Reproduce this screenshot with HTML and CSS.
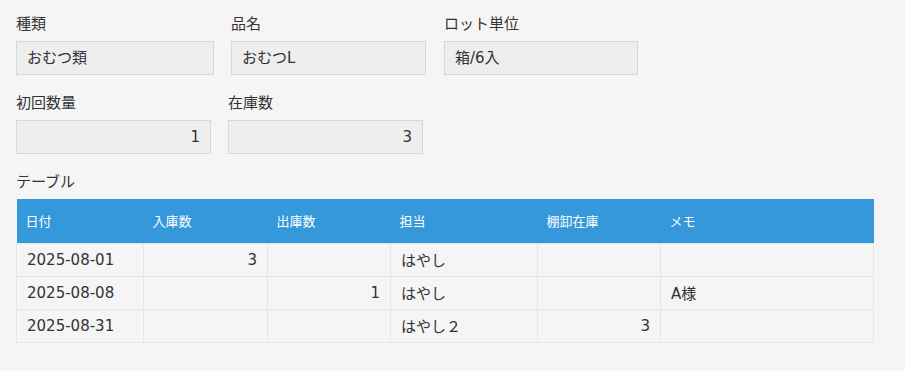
FILE: index.html
```html
<!DOCTYPE html>
<html lang="ja">
<head>
    <meta charset="UTF-8">
    <title>在庫レコード</title>
    <link rel="stylesheet" href="styles.css">
</head>
<body>
    <div class="record">
        <div class="row">
            <div class="field f-kind">
                <div class="label">種類</div>
                <div class="value">おむつ類</div>
            </div>
            <div class="field f-name">
                <div class="label">品名</div>
                <div class="value">おむつL</div>
            </div>
            <div class="field f-lot">
                <div class="label">ロット単位</div>
                <div class="value">箱/6入</div>
            </div>
        </div>
        <div class="row">
            <div class="field">
                <div class="label">初回数量</div>
                <div class="value num">1</div>
            </div>
            <div class="field">
                <div class="label">在庫数</div>
                <div class="value num">3</div>
            </div>
        </div>
        <div class="table-field">
            <div class="label">テーブル</div>
            <table class="subtable">
                <thead>
                    <tr>
                        <th class="c-date">日付</th>
                        <th class="c-in">入庫数</th>
                        <th class="c-out">出庫数</th>
                        <th class="c-user">担当</th>
                        <th class="c-stock">棚卸在庫</th>
                        <th class="c-memo">メモ</th>
                    </tr>
                </thead>
                <tbody>
                    <tr>
                        <td>2025-08-01</td>
                        <td class="num">3</td>
                        <td class="num"></td>
                        <td>はやし</td>
                        <td class="num"></td>
                        <td></td>
                    </tr>
                    <tr>
                        <td>2025-08-08</td>
                        <td class="num"></td>
                        <td class="num">1</td>
                        <td>はやし</td>
                        <td class="num"></td>
                        <td>A様</td>
                    </tr>
                    <tr>
                        <td>2025-08-31</td>
                        <td class="num"></td>
                        <td class="num"></td>
                        <td>はやし２</td>
                        <td class="num">3</td>
                        <td></td>
                    </tr>
                </tbody>
            </table>
        </div>
    </div>
</body>
</html>
```

FILE: styles.css
```css
body {
    margin: 0;
    padding: 0;
    background-color: #f5f5f5;
    color: #333;
    font-family: "DejaVu Sans", "Noto Sans CJK JP", sans-serif;
    font-size: 15px;
}
.record {
    padding: 14px 16px;
}
.row {
    display: flex;
    gap: 17px;
    margin-bottom: 18px;
}
.field {
    width: 195px;
}
.field.f-kind {
    width: 198px;
}
.field.f-lot {
    width: 194px;
    margin-left: 1px;
}
.label {
    height: 20px;
    line-height: 20px;
    margin-bottom: 7px;
}
.value {
    box-sizing: border-box;
    height: 34px;
    line-height: 32px;
    padding: 0 10px;
    background-color: #eeeeee;
    border: 1px solid #d8d8d8;
}
.value.num {
    text-align: right;
}
.subtable {
    border-collapse: collapse;
    width: 858px;
    table-layout: fixed;
}
.subtable th,
.subtable td {
    box-sizing: border-box;
    padding: 0 10px;
}
.subtable th {
    height: 44px;
    padding-left: 9px;
    background-color: #3498db;
    color: #fff;
    font-size: 13px;
    font-weight: normal;
    text-align: left;
    border: none;
}
.subtable td {
    height: 33px;
    border: 1px solid #e3e7e8;
}
.subtable td.num {
    text-align: right;
}
.c-date { width: 127px; }
.c-in { width: 124px; }
.c-out { width: 123px; }
.c-user { width: 147px; }
.c-stock { width: 123px; }
```
